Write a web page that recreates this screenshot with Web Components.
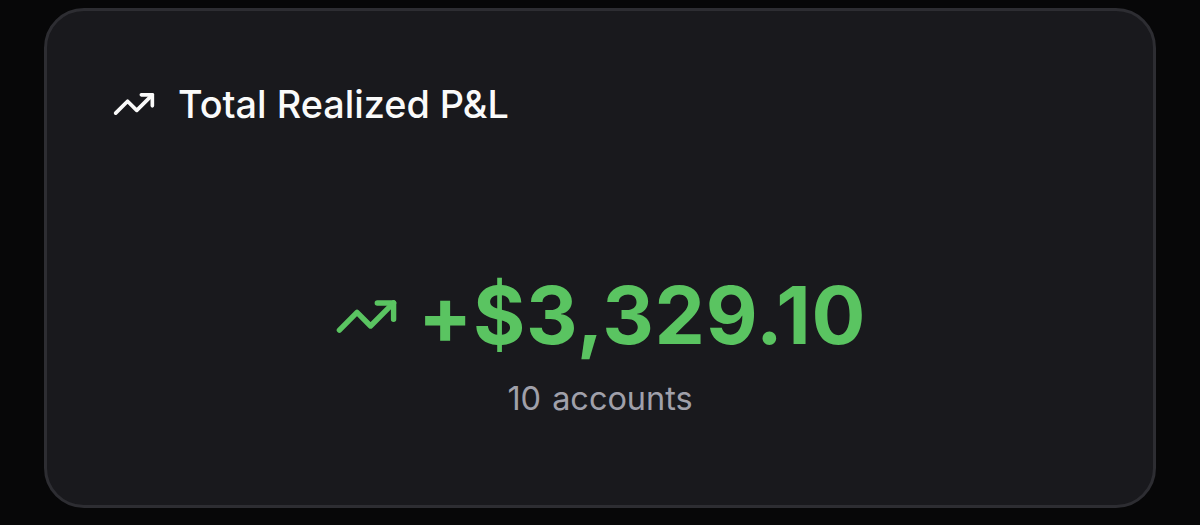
<!DOCTYPE html>
<html lang="en"><head><meta charset="utf-8"><title>Total Realized P&amp;L</title>
<style>html,body{margin:0;background:#070708;height:100%;overflow:hidden}body{font-family:Inter,sans-serif}</style></head><body>
<stat-card><trend-icon slot="icon"></trend-icon><span slot="title">Total Realized P&amp;L</span><stat-value><trend-icon slot="icon"></trend-icon>+$3,329.10</stat-value><span slot="note">10 accounts</span></stat-card>
<script>
const define=(name,html)=>customElements.define(name,class extends HTMLElement{constructor(){super();this.attachShadow({mode:"open"}).innerHTML=html}});
define("trend-icon",`<style>:host{display:block;width:var(--icon-size,42px);height:var(--icon-size,42px);flex:none}svg{display:block;width:100%;height:100%;overflow:visible}</style><svg viewBox="0 0 24 24" fill="none" stroke="currentColor" stroke-width="2" stroke-linecap="round" stroke-linejoin="round"><path d="M22 7 13.5 15.5 8.5 10.5 2 17"/><path d="M16 7h6v6"/></svg>`);
define("stat-value",`<style>:host{display:flex;align-items:center;justify-content:center;gap:19px;color:#5ac461;font-size:80px;font-weight:700;line-height:98px;--icon-size:65px}.v{white-space:nowrap;display:block;letter-spacing:.7px;margin-bottom:2px;font-feature-settings:"calt" 0}</style><slot name="icon"></slot><span class="v"><slot></slot></span>`);
define("stat-card",`<style>:host{display:block;box-sizing:border-box;margin:8px 44px 0;width:1112px;height:500px;border:3px solid #2d2d32;border-radius:40px;background:#19191d;color:#fafafa;overflow:hidden}header{display:flex;align-items:center;gap:22px;margin:68px 0 0 65px;height:50px;font-size:37.8px;font-weight:500;white-space:nowrap;--icon-size:44px}.body{margin-top:137px}.note{text-align:center;font-size:32.5px;letter-spacing:-.05px;word-spacing:2px;line-height:40px;margin-top:13px;color:#a0a0aa}</style><header><slot name="icon"></slot><slot name="title"></slot></header><div class="body"><slot></slot></div><div class="note"><slot name="note"></slot></div>`);
</script></body></html>
